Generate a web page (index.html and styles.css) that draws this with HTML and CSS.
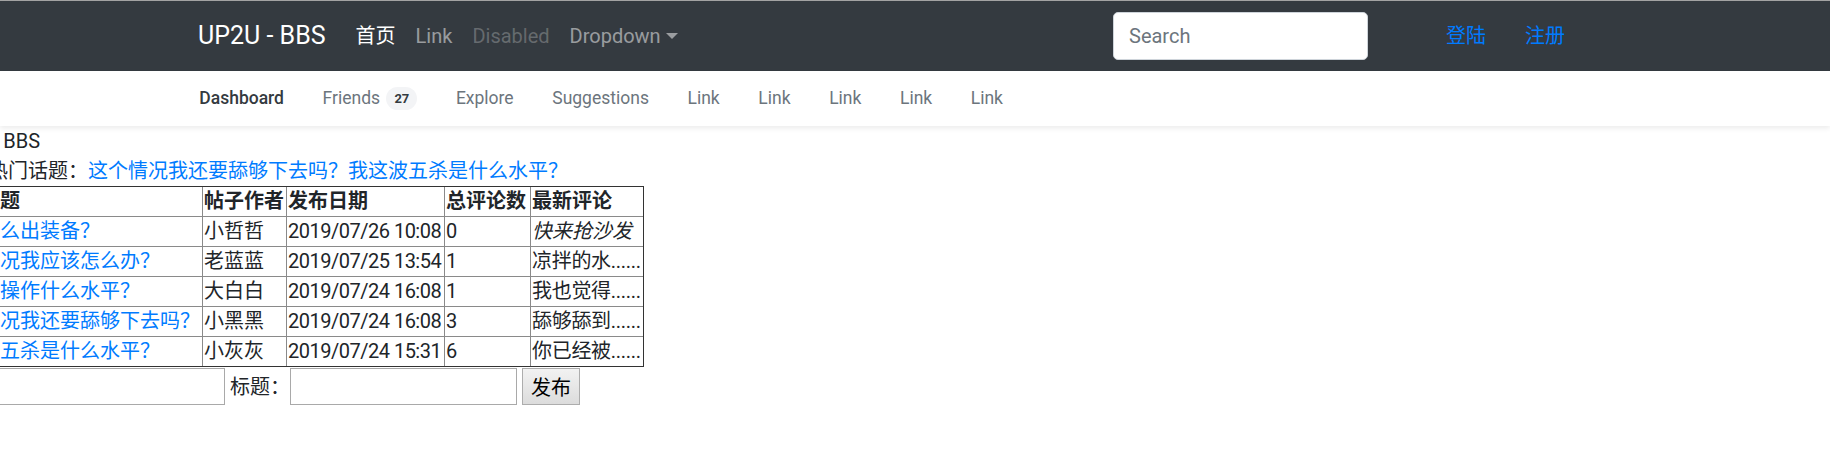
FILE: index.html
```html
<!DOCTYPE html>
<html lang="zh">
<head>
<meta charset="utf-8">
<title>UP2U - BBS</title>
<link rel="stylesheet" href="styles.css">
</head>
<body>
<nav class="topbar">
  <div class="topbar-inner">
    <a class="brand" href="#">UP2U - BBS</a>
    <ul class="topnav">
      <li><a class="tlink active" href="#">首页</a></li>
      <li><a class="tlink" href="#">Link</a></li>
      <li><a class="tlink disabled" href="#">Disabled</a></li>
      <li><a class="tlink dropdown" href="#">Dropdown</a></li>
    </ul>
    <form class="search"><input class="search-input" type="text" placeholder="Search"></form>
    <ul class="usernav">
      <li><a class="ulink" href="#">登陆</a></li>
      <li><a class="ulink" href="#">注册</a></li>
    </ul>
  </div>
</nav>
<div class="subnav">
  <nav class="subnav-inner">
    <a class="slink active" href="#">Dashboard</a>
    <a class="slink" href="#">Friends <span class="badge">27</span></a>
    <a class="slink" href="#">Explore</a>
    <a class="slink" href="#">Suggestions</a>
    <a class="slink" href="#">Link</a>
    <a class="slink" href="#">Link</a>
    <a class="slink" href="#">Link</a>
    <a class="slink" href="#">Link</a>
    <a class="slink" href="#">Link</a>
  </nav>
</div>
<main class="main">
  <div class="site">UP2U - BBS</div>
  <div class="hot">热门话题：<a href="#">这个情况我还要舔够下去吗？</a><a href="#">我这波五杀是什么水平？</a></div>
  <table class="posts">
    <thead>
      <tr><th class="c1">帖子标题</th><th class="c2">帖子作者</th><th class="c3">发布日期</th><th class="c4">总评论数</th><th class="c5">最新评论</th></tr>
    </thead>
    <tbody>
      <tr><td><a href="#">亚索怎么出装备？</a></td><td>小哲哲</td><td class="date">2019/07/26 10:08</td><td>0</td><td><em>快来抢沙发</em></td></tr>
      <tr><td><a href="#">这个情况我应该怎么办？</a></td><td>老蓝蓝</td><td class="date">2019/07/25 13:54</td><td>1</td><td class="last">凉拌的水......</td></tr>
      <tr><td><a href="#">我这个操作什么水平？</a></td><td>大白白</td><td class="date">2019/07/24 16:08</td><td>1</td><td class="last">我也觉得......</td></tr>
      <tr><td><a href="#">这个情况我还要舔够下去吗？</a></td><td>小黑黑</td><td class="date">2019/07/24 16:08</td><td>3</td><td class="last">舔够舔到......</td></tr>
      <tr><td><a href="#">我这波五杀是什么水平？</a></td><td>小灰灰</td><td class="date">2019/07/24 15:31</td><td>6</td><td class="last">你已经被......</td></tr>
    </tbody>
  </table>
  <form class="post-form"><label class="flabel">作者：</label><input class="finput" type="text"><label class="flabel">标题：</label><input class="finput" type="text"><button class="fbtn" type="button">发布</button></form>
</main>
</body>
</html>
```
FILE: styles.css
```css
* { box-sizing: border-box; }
html, body { margin: 0; padding: 0; }
body {
  font-family: Roboto, "Noto Sans CJK SC", sans-serif;
  font-size: 20px;
  line-height: 1.5;
  color: #212529;
  background: #fff;
  overflow: hidden;
}
a { text-decoration: none; }
ul { list-style: none; margin: 0; padding: 0; }

/* top navbar */
.topbar {
  background: #343a40;
  border-top: 1px solid #a3a3a3;
  height: 71px;
}
.topbar-inner {
  display: flex;
  align-items: center;
  height: 100%;
  padding-left: 198px;
  padding-right: 265px;
}
.brand {
  color: #fff;
  font-size: 25px;
  margin-right: 20px;
  white-space: nowrap;
}
.topnav { display: flex; flex: 1; }
.tlink {
  display: block;
  padding: 0 10px;
  color: rgba(255, 255, 255, .5);
  font-size: 20px;
}
.tlink.active { color: #fff; }
.tlink.disabled { color: rgba(255, 255, 255, .25); }
.tlink.dropdown::after {
  content: "";
  display: inline-block;
  margin-left: 5px;
  vertical-align: 4px;
  border-top: 6px solid;
  border-right: 6px solid transparent;
  border-left: 6px solid transparent;
}
.search { margin: 0; }
.search-input {
  display: block;
  width: 255px;
  height: 48px;
  padding: 7px 15px;
  font-family: inherit;
  font-size: 20px;
  border: 1px solid #ced4da;
  border-radius: 5px;
  background: #fff;
  color: #495057;
}
.search-input::placeholder { color: #6c757d; }
.usernav { display: flex; gap: 39px; margin-left: 78px; }
.ulink { color: #007bff; font-size: 20px; }

/* sub navigation */
.subnav {
  background: #fff;
  height: 55px;
  box-shadow: 0 2.5px 5px rgba(0, 0, 0, .075);
  position: relative;
}
.subnav-inner {
  display: flex;
  align-items: center;
  height: 100%;
  padding-left: 180px;
}
.slink {
  padding: 0 19.3px;
  font-size: 17.5px;
  color: #6c757d;
  white-space: nowrap;
}
.slink.active { color: #343a40; font-weight: 500; }
.badge {
  display: inline-block;
  font-size: 13px;
  font-weight: 700;
  line-height: 1;
  padding: 5px 8px;
  border-radius: 16px;
  background: #f3f4f6;
  color: #343a40;
  vertical-align: 1px;
  margin-left: 2px;
}

/* main */
.main { margin-left: -62px; }
.site { white-space: nowrap; }
.hot { margin-left: 50px; white-space: nowrap; }
.hot a, .posts a { color: #007bff; }

.posts {
  width: 704px;
  border-collapse: separate;
  border-spacing: 0;
  border: 1px solid #333;
  white-space: nowrap;
  table-layout: fixed;
}
.posts th, .posts td {
  padding: 0 1px;
  line-height: 29px;
  text-align: left;
  border-left: 1px solid #8a8a8a;
  border-top: 1px solid #8a8a8a;
  overflow: hidden;
}
.posts th:first-child, .posts td:first-child { border-left: 0; }
.posts thead th { border-top: 0; font-weight: 700; }
.posts em { font-style: italic; }
.posts .date { letter-spacing: -0.5px; }
.posts .last { letter-spacing: -0.3px; }
.c1 { width: 263px; }
.c2 { width: 84px; }
.c3 { width: 158px; }
.c4 { width: 86px; }
.c5 { width: 113px; }

.post-form {
  display: flex;
  align-items: center;
  margin: 1px 0 0 0;
  white-space: nowrap;
}
.flabel { margin-right: 0; }
.finput {
  width: 227px;
  height: 37px;
  border: 1px solid #a9a9a9;
  margin: 0 5px 0 0;
  font-size: 20px;
}
.fbtn {
  height: 37px;
  padding: 0 8px;
  font-family: inherit;
  font-size: 20px;
  color: #000;
  border: 1px solid #adadad;
  background: linear-gradient(#f2f2f2, #dcdcdc);
}
```
